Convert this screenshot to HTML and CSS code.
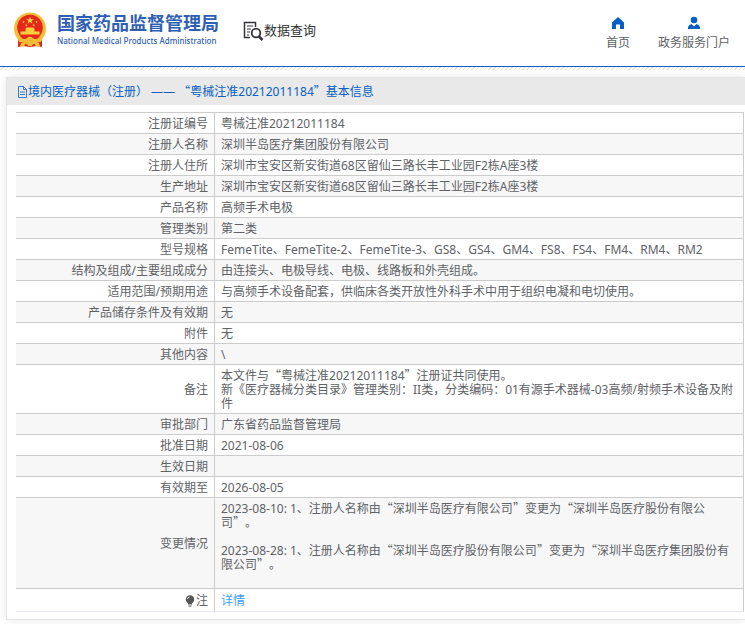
FILE: index.html
```html
<!DOCTYPE html>
<html lang="zh-CN">
<head>
<meta charset="utf-8">
<meta name="viewport" content="width=device-width, initial-scale=1">
<title>国家药品监督管理局 数据查询</title>
<link rel="stylesheet" href="styles.css">
</head>
<body>
<header class="header">
  <a class="brand" href="#">
    <svg class="emblem" viewBox="0 0 34 36" aria-hidden="true">
      <path d="M5 24L5 35L10 34L17 35L24 34L29 35L29 24Z" fill="#d92a1c"/>
      <circle cx="17" cy="16.500" r="16" fill="#f4bd35"/>
      <circle cx="17" cy="15.500" r="12.800" fill="#e6271b"/>
      <path d="M17 4.500L18 7.300H21L18.600 9L19.500 11.800L17 10.100L14.500 11.800L15.400 9L13 7.300H16Z" fill="#f9cf3c"/>
      <g fill="#f3b52f"><circle cx="10.500" cy="10" r="1"/><circle cx="23.500" cy="10" r="1"/><circle cx="13.300" cy="13.300" r="1"/><circle cx="20.700" cy="13.300" r="1"/></g>
      <path d="M12.500 17L13.500 15.500H20.500L21.500 17V19.500H26.500V22.500H7.500V19.500H12.500Z" fill="#f9cf3c"/>
      <path d="M7 24H27L24 27H10Z" fill="#e6271b"/>
      <path d="M4 25Q11 29 14 26Q17 23.500 20 26Q23 29 30 25L28 30Q22 31 19.500 29Q17 27.500 14.500 29Q12 31 6 30Z" fill="#f4bd35"/>
      <path d="M8 31L13 30.500L11 34.500H7ZM26 31L21 30.500L23 34.500H27ZM14 31H20L19 34H15Z" fill="#f4bd35"/>
    </svg>
    <span class="brand-text">
      <span class="brand-cn">国家药品监督管理局</span>
      <span class="brand-en">National Medical Products Administration</span>
    </span>
  </a>
  <a class="query" href="#">
    <svg class="query-icon" viewBox="0 0 21 21" fill="none" stroke="#35323e" aria-hidden="true">
      <path d="M7 17.500H1.500V2.500H12.500V7" stroke-width="1.500"/>
      <path d="M4 6H10M4 9H8M4 12H7M4 15H6" stroke-width="1.200"/>
      <circle cx="13" cy="13" r="4.300" stroke-width="1.800"/>
      <path d="M16 16.500L19.500 20" stroke-width="2.500"/>
    </svg>
    <span>数据查询</span>
  </a>
  <nav class="nav">
    <a href="#">
      <svg viewBox="0 0 14 14" fill="#0860c4" aria-hidden="true"><path d="M7 1L13 6.500V13H9V8.500H5V13H1V6.500Z"/></svg>
      <span>首页</span>
    </a>
    <a href="#">
      <svg viewBox="0 0 14 14" fill="#0860c4" aria-hidden="true"><circle cx="7" cy="4" r="3.300"/><path d="M1 13V11Q2 8.500 4.500 8L7 10.500L9.500 8Q12 8.500 13 11V13Z"/></svg>
      <span>政务服务门户</span>
    </a>
  </nav>
</header>
<div class="hatch"></div>
<main class="card">
  <h1 class="title">
    <svg viewBox="0 0 11 12" fill="none" stroke="#0860c4" aria-hidden="true"><path d="M1.500 .5H6.500L9.500 3.500V11.500H1.500ZM6.500 .5V3.500H9.500M3 6H8M3 8.500H8" stroke-width=".8"/></svg>
    <span>境内医疗器械（注册） —— <span class="q">“</span>粤械注准20212011184<span class="q">”</span>基本信息</span>
  </h1>
  <table class="info">
    <tbody>
      <tr><th scope="row">注册证编号</th><td>粤械注准20212011184</td></tr>
      <tr><th scope="row">注册人名称</th><td>深圳半岛医疗集团股份有限公司</td></tr>
      <tr><th scope="row">注册人住所</th><td>深圳市宝安区新安街道68区留仙三路长丰工业园F2栋A座3楼</td></tr>
      <tr><th scope="row">生产地址</th><td>深圳市宝安区新安街道68区留仙三路长丰工业园F2栋A座3楼</td></tr>
      <tr><th scope="row">产品名称</th><td>高频手术电极</td></tr>
      <tr><th scope="row">管理类别</th><td>第二类</td></tr>
      <tr><th scope="row">型号规格</th><td>FemeTite、FemeTite-2、FemeTite-3、GS8、GS4、GM4、FS8、FS4、FM4、RM4、RM2</td></tr>
      <tr><th scope="row">结构及组成/主要组成成分</th><td>由连接头、电极导线、电极、线路板和外壳组成。</td></tr>
      <tr><th scope="row">适用范围/预期用途</th><td>与高频手术设备配套，供临床各类开放性外科手术中用于组织电凝和电切使用。</td></tr>
      <tr><th scope="row">产品储存条件及有效期</th><td>无</td></tr>
      <tr><th scope="row">附件</th><td>无</td></tr>
      <tr><th scope="row">其他内容</th><td>\</td></tr>
      <tr><th scope="row">备注</th><td>本文件与<span class="q">“</span>粤械注准20212011184<span class="q">”</span>注册证共同使用。<br>新《医疗器械分类目录》管理类别：II类，分类编码：01有源手术器械-03高频/射频手术设备及附件</td></tr>
      <tr><th scope="row">审批部门</th><td>广东省药品监督管理局</td></tr>
      <tr><th scope="row">批准日期</th><td>2021-08-06</td></tr>
      <tr><th scope="row">生效日期</th><td></td></tr>
      <tr><th scope="row">有效期至</th><td>2026-08-05</td></tr>
      <tr><th scope="row">变更情况</th><td>2023-08-10: 1、注册人名称由<span class="q">“</span>深圳半岛医疗有限公司<span class="q">”</span>变更为<span class="q">“</span>深圳半岛医疗股份有限公司<span class="q">”</span>。<br><br>2023-08-28: 1、注册人名称由<span class="q">“</span>深圳半岛医疗股份有限公司<span class="q">”</span>变更为<span class="q">“</span>深圳半岛医疗集团股份有限公司<span class="q">”</span>。<br><br></td></tr>
      <tr class="note"><th scope="row"><svg viewBox="0 0 10 12" aria-hidden="true"><circle cx="5" cy="4.500" r="4.200" fill="#555"/><path d="M3 8H7V9.500H3ZM3.500 10.500H6.500V11.500H3.500Z" fill="#555"/><path d="M2.500 4Q2.700 2.300 4.500 2" fill="none" stroke="#fff"/></svg>注</th><td><a href="#">详情</a></td></tr>
    </tbody>
  </table>
</main>
</body>
</html>
```
FILE: styles.css
```css
* {
  box-sizing: border-box;
}

body {
  margin: 0;
  background: #fff;
  color: #606266;
  font: 12px/14px "Noto Sans", "Noto Sans CJK SC", sans-serif;
  text-spacing-trim: space-all;
}

a {
  color: inherit;
  text-decoration: none;
}

svg {
  display: block;
  flex: none;
}

.header {
  display: flex;
  align-items: center;
  height: 67px;
  padding: 0 15px 6px 13px;
  border-bottom: 1px solid #0860c4;
}

.brand {
  display: flex;
  align-items: center;
  gap: 10px;
  color: #2f5fb3;
}

.emblem {
  width: 34px;
  height: 36px;
}

.brand-text {
  display: flex;
  flex-direction: column;
  white-space: nowrap;
}

.brand-cn {
  font-size: 18px;
  font-weight: 700;
  line-height: 22px;
}

.brand-en {
  font: 500 8px/14px "Noto Sans", sans-serif;
}

.query {
  display: flex;
  align-items: center;
  margin-left: 24px;
  color: #333;
  font-size: 13px;
  line-height: 20px;
  white-space: nowrap;
}

.query-icon {
  width: 21px;
  height: 21px;
}

.nav {
  display: flex;
  gap: 28px;
  margin-left: auto;
  padding-top: 8px;
  white-space: nowrap;
}

.nav a {
  display: flex;
  flex-direction: column;
  align-items: center;
  gap: 4px;
  line-height: 18px;
}

.nav svg {
  width: 14px;
  height: 14px;
}

.hatch {
  height: 3px;
  background: repeating-linear-gradient(135deg, #fff 0 2px, #e6e6e6 2px 3px);
}

.q {
  font-family: "Noto Sans CJK SC", sans-serif;
  line-height: 0;
}

.card {
  margin: 7px 0 5px 6px;
  padding-bottom: 7px;
  border: 1px solid #e6e6e6;
  border-right: 0;
  box-shadow: 0 0 8px rgba(0, 0, 0, 0.1);
}

.title {
  display: flex;
  align-items: center;
  height: 27px;
  margin: 0 0 7px;
  padding-left: 10px;
  background: #e9e9e9;
  color: #0860c4;
  font-size: 12px;
  font-weight: 400;
}

.title svg {
  width: 11px;
  height: 12px;
}

.info {
  width: calc(100% - 10px);
  margin-left: 9px;
  border-spacing: 0;
  border-top: 1px solid #ccc;
}

.info th,
.info td {
  height: 21px;
  padding: 4px 6px 2px;
  border-right: 1px solid #ccc;
  border-bottom: 1px solid #ccc;
  font-weight: 400;
  text-align: left;
}

.info th {
  width: 199px;
  text-align: right;
}

.info tr:nth-child(even) {
  background: #f7f7f7;
}

.info .note th,
.info .note td {
  height: 23px;
  border-bottom-color: #e6e9f0;
}

.note svg {
  display: inline-block;
  width: 10px;
  height: 12px;
  margin-right: 1px;
  vertical-align: -2px;
}

.note a {
  color: #409eff;
}
```
